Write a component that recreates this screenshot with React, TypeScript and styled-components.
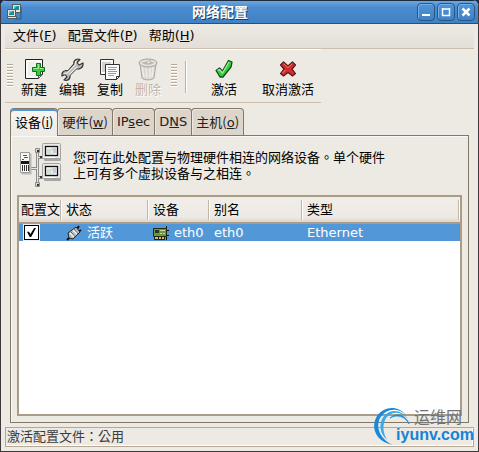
import React, { useState } from 'react';
import styled, { createGlobalStyle } from 'styled-components';

const GlobalStyle = createGlobalStyle`
  * { box-sizing: border-box; }
  body {
    margin: 0;
    background: #1c2a3c;
    color: #000;
    font: 13px/16px "DejaVu Sans", "Noto Sans CJK SC", sans-serif;
  }
  button {
    margin: 0;
    padding: 0;
    border: 0;
    background: none;
    color: inherit;
    font: inherit;
    white-space: nowrap;
  }
  svg { display: block; flex: none; }
`;

const Window = styled.main`
  display: flex;
  flex-direction: column;
  min-height: 100vh;
  overflow: hidden;
  background: #edeae4;
  border: 1px solid #40383a;
  border-top: 0;
  border-radius: 6px 6px 0 0;
`;

const TitleBar = styled.header`
  display: flex;
  align-items: center;
  height: 24px;
  padding: 0 3px 0 5px;
  background: linear-gradient(#6ba6e2, #4a8ccf 30%, #3f82c4);
  border-top: 1px solid #1d2b3f;
  border-bottom: 1px solid #2a4f78;
`;

const Title = styled.h1`
  flex: 1;
  margin: 0;
  color: #fff;
  font-size: 14px;
  line-height: 20px;
  text-align: center;
  text-shadow: 1px 1px 0 #1e3f66;
`;

const WindowButtons = styled.div`
  display: flex;
  gap: 2px;
`;

const WindowButton = styled.button`
  display: grid;
  place-items: center;
  width: 18px;
  height: 18px;
  background: linear-gradient(#4f94da, #3f82c4);
  border: 1px solid #2a5585;
  border-radius: 4px;
  box-shadow: inset 1px 1px 0 #78b0e8;
`;

const MenuBar = styled.nav`
  display: flex;
  gap: 1px;
  height: 25px;
  margin: 0 4px;
  padding: 0 3px;
  background: linear-gradient(#edeae4, #e3ded7);
  border-bottom: 1px solid #cdbfae;
`;

const MenuButton = styled.button`
  padding: 0 5px;
`;

const Toolbar = styled.div`
  display: flex;
  align-self: flex-start;
  height: 54px;
  margin-left: 4px;
  border-top: 1px solid #fff;
  border-bottom: 1px solid #cdbfae;
`;

const Grip = styled.span`
  align-self: center;
  width: 6px;
  height: 24px;
  margin: 0 2px;
  background: repeating-linear-gradient(#b8aa94 0 1px, #fff 1px 2px, #edeae4 2px 3px);
  &:not(:first-child) { margin-left: 4px; }
`;

const ToolButton = styled.button<{ $pad?: number }>`
  display: flex;
  flex-direction: column;
  align-items: center;
  padding: 6px ${p => p.$pad ?? 6}px 0;
  &:disabled {
    color: #bdb6ac;
    text-shadow: 1px 1px 0 #fff;
  }
`;

const Separator = styled.span`
  width: 2px;
  height: 32px;
  margin: 11px 6px 0;
  background: linear-gradient(90deg, #b8b0a4 50%, #fff 50%);
`;

const TabList = styled.div`
  display: flex;
  align-items: flex-end;
  margin: 5px 9px -1px;
  z-index: 1;
`;

const Tab = styled.button<{ $active: boolean }>`
  height: ${p => (p.$active ? 28 : 27)}px;
  margin-bottom: ${p => (p.$active ? 0 : 1)}px;
  padding: 0 4px;
  color: ${p => (p.$active ? '#000' : '#222')};
  background: ${p => (p.$active ? 'linear-gradient(#f8f6f3, #edeae4)' : '#ddd4ca')};
  border: 1px solid #857765;
  border-bottom: 0;
  border-radius: 4px 4px 0 0;
  box-shadow: ${p => (p.$active ? 'inset 0 2px 0 #4f96db' : 'inset 1px 1px 0 #eee8e1')};
  & + & { margin-left: -1px; }
`;

const TabName = styled.span`
  font-family: "Noto Sans CJK SC", sans-serif;
`;

const Panel = styled.section`
  display: flex;
  flex: 1;
  flex-direction: column;
  margin: 0 9px;
  padding: 6px;
  border: 1px solid #857765;
  box-shadow: inset 1px 1px 0 #faf8f5;
`;

const Intro = styled.div`
  display: flex;
  gap: 11px;
  height: 53px;
`;

const Description = styled.p`
  max-width: 314px;
  margin: 8px 0 0;
  font-family: "DejaVu Sans", "Noto Sans CJK TC", sans-serif;
`;

const TableFrame = styled.div`
  flex: 1;
  background: #fff;
  border: 2px solid #ab9c87;
`;

const DeviceTable = styled.table`
  width: 100%;
  table-layout: fixed;
  border-collapse: separate;
  border-spacing: 0;
`;

const HeadCell = styled.th`
  height: 27px;
  padding: 0 0 0 4px;
  overflow: hidden;
  font-weight: 400;
  text-align: left;
  white-space: nowrap;
  background:
    linear-gradient(#c0b7ab, #c0b7ab) right 1px center / 1px 20px no-repeat,
    linear-gradient(#fff, #fff) right center / 1px 20px no-repeat,
    linear-gradient(#f1eeea, #edeae4 80%, #ddd7ce);
  border-bottom: 2px solid #ab9c87;
  &:first-child { padding-left: 2px; }
`;

const Cell = styled.td`
  height: 17px;
  padding: 0 0 0 4px;
  color: #fff;
  background: #5298d8;
`;

const CellContent = styled.span`
  display: flex;
  align-items: center;
  gap: 5px;
`;

const Check = styled.input`
  display: grid;
  place-items: center;
  appearance: none;
  width: 15px;
  height: 15px;
  margin: 0 0 0 1px;
  background: #fff;
  border: 1px solid #000;
  box-shadow: 0 0 0 1px #e8eef5;
  &:checked::before {
    content: "";
    width: 9px;
    height: 9px;
    background: #000;
    clip-path: polygon(0 42%, 22% 42%, 38% 68%, 80% 0, 100% 0, 46% 100%, 30% 100%);
  }
`;

const StatusBar = styled.footer`
  height: 20px;
  margin: 4px;
  padding: 1px;
  color: #3c3c3c;
  font-family: "DejaVu Sans", "Noto Sans CJK TC", sans-serif;
  border: 1px solid #b5a794;
  box-shadow: inset -1px -1px 0 #fff;
`;

const Watermark = styled.a`
  position: absolute;
  right: 5px;
  bottom: 6px;
  z-index: 2;
  display: flex;
  text-decoration: none;
`;

const WatermarkText = styled.span`
  display: flex;
  flex-direction: column;
  margin-left: -15px;
  color: #1683d4;
  font: bold 16px/18px "Liberation Sans", sans-serif;
`;

const WatermarkName = styled.span`
  margin-left: 18px;
  color: #6e7277;
  font: 16px/20px "Noto Sans CJK SC", sans-serif;
`;

const AppIcon = () => (
  <svg width="17" height="17" viewBox="0 0 17 17">
    <path d="M15 3v12H9" fill="none" stroke="#315779" />
    <rect x="6.5" y=".5" width="8" height="8" fill="#e7e3da" stroke="#555b60" />
    <rect x="8" y="2" width="5" height="4" fill="#178e92" />
    <path d="M8 2h3L8 5z" fill="#43d1c8" />
    <path d="M1.500 14.500h9v-2h-9zM1.500 5.500h8v7h-8z" fill="#e7e3da" stroke="#555b60" />
    <rect x="3" y="7" width="5" height="4" fill="#178e92" />
    <path d="M3 7h4L3 10z" fill="#43d1c8" />
  </svg>
);

const NewIcon = () => (
  <svg width="26" height="26" viewBox="0 0 26 26">
    <path d="M4.500 3.500h17v15l-4 4h-13z" fill="#fafafa" stroke="#222" />
    <path d="M7 6h11v10l-3 4H7z" fill="#eeeeed" />
    <path d="M17.500 22.500v-4h4z" fill="#ddd" stroke="#555" />
    <path d="M15.500 7.500h4v4h4v4h-4v4h-4v-4h-4v-4h4z" fill="#43c646" stroke="#08751c" />
    <path d="M16.500 8.500h1v4h-5M19 12.500h3.500" fill="none" stroke="#a0f08b" />
  </svg>
);

const EditIcon = () => (
  <svg width="26" height="26" viewBox="0 0 26 26">
    <path
      d="M17 3.500c2-1 4 0 4 0l-3 3 2 2.500 4-2c.5 3-1 5-4 6h-3l-6 6c.5 3-1 5-4 5.500l-2-.5 3-3-2-2.500-3 1.500c-.5-3 1-5 4-5.500l2 .3 6-7c-.5-2 .5-3.500 2-4.300z"
      fill="#b8b8b8" stroke="#333" strokeWidth="1.200" strokeLinejoin="round"
    />
    <path d="M17 5l-1 4-8 8-3 1M18 11l-8 8" fill="none" stroke="#eee" strokeWidth="1.200" />
  </svg>
);

const CopyIcon = () => (
  <svg width="26" height="26" viewBox="0 0 26 26">
    <g fill="#fafafa" stroke="#333">
      <path d="M3.500 3.500h13v15h-13z" />
      <path d="M5 7h9M5 9h9M5 11h9M5 13h9M5 15h9" stroke="#aaa" />
      <path d="M8.500 8.500h14v12l-3 3h-11z" />
      <path d="M19.500 23.500v-3h3z" />
      <path d="M11 11.500h9M11 13.500h8M11 15.500h9M11 17.500h8M11 19.500h6" stroke="#999" />
    </g>
  </svg>
);

const DeleteIcon = () => (
  <svg width="26" height="26" viewBox="0 0 26 26">
    <path d="M5 8l2 14c2 2.500 10 2.500 12 0l2-14z" fill="#dad7d1" stroke="#aaa69f" />
    <path d="M7 10l2 11M11 11l1 11M15 11v11M18 11l-1 10" stroke="#eeece8" strokeWidth="1.500" />
    <ellipse cx="13" cy="7" rx="9" ry="4" fill="#e2dfd9" stroke="#a5a199" />
    <path d="M7 7c2-2 10-2 12 0-3 2-9 2-12 0z" fill="#bcb8b1" />
    <path d="M11 7l4-3 1 2-3 2z" fill="#eee" stroke="#aaa69f" strokeWidth=".7" />
  </svg>
);

const ApplyIcon = () => (
  <svg width="26" height="26" viewBox="0 0 26 26">
    <path d="M5 14.500l3.500-2.500 3 3 6-10.500L21 6l-1 5-8 10H9z" fill="#31cf3c" stroke="#174c1b" strokeWidth="1.300" strokeLinejoin="round" />
    <path d="M6.500 14.500l2-1 3 3.500 6.500-11" fill="none" stroke="#a8f09e" strokeWidth="1.300" />
  </svg>
);

const CancelIcon = () => (
  <svg width="26" height="26" viewBox="0 0 26 26">
    <path d="M8.500 6l4.500 4 4.500-4 3 3-3.500 4 3.500 4.500-3 2.500-4.500-3.500-4.500 3.500-3-2.500L9 13 5.500 9z" fill="#d52b2b" stroke="#551a1a" strokeWidth="1.200" strokeLinejoin="round" />
    <path d="M8.500 7.500l4.500 4 4.500-4M7.500 17l3-3" fill="none" stroke="#f47b73" />
  </svg>
);

const NetworkIcon = () => (
  <svg width="45" height="46" viewBox="0 0 45 46">
    <path d="M13 26.500h7M20.500 9v33M20 15.500h6M20 35.500h6" fill="none" stroke="#8d8d8b" strokeWidth="3" />
    <path d="M13 26.500h7M20.500 9v33M20 15.500h6M20 35.500h6" fill="none" stroke="#e6e6e4" />
    <path d="M18.500 6.500h4v4h-4zM18.500 40.500h4v4h-4z" fill="#d5d5d3" stroke="#8d8d8b" />
    <path d="M20 8h2v2h-2zM20 42h2v2h-2zM23 14h2v2h-2zM23 34h2v2h-2z" fill="#333" />
    <path d="M4.500 31.500h9v-20" fill="none" stroke="#bdbab5" strokeWidth="2" />
    <path d="M3.500 10.500h9v20h-9z" fill="#f7f7f6" stroke="#9b9b99" />
    <path d="M6 13.500h4M7 15.500h4M5 17.500h2" stroke="#555" />
    <path d="M4 19h8v3H4z" fill="#161616" />
    <path d="M5.500 23v6M7.500 23v6M9.500 23v6M11.500 23v6" stroke="#333" />
    {[1, 21].map(y => (
      <g key={y} transform={`translate(25 ${y})`}>
        <rect x="2" y="3" width="17" height="15" rx="1" fill="#aaa7a2" />
        <rect x=".5" y=".5" width="18" height="15" rx="1" fill="#e9e9e7" stroke="#a2a2a0" />
        <rect x="3.500" y="3.500" width="12" height="9" fill="#f1f3f1" stroke="#111" strokeWidth="1.300" />
        <path d="M5 6h4v4H5z" fill="#cfe0d0" />
        <path d="M11 5h3v5h-3z" fill="#c9c8dc" />
        <path d="M5 11h7M10 5v3" stroke="#c4c4ca" />
        <path d="M3 14.500h10" stroke="#fff" />
      </g>
    ))}
  </svg>
);

const PlugIcon = () => (
  <svg width="16" height="16" viewBox="0 0 16 16">
    <path d="M1 15l3-3M11 4l2-3M12 7l3-2" stroke="#111" strokeWidth="2" />
    <path d="M2 8l8-6 4 5-7 7-4-1z" fill="#b9bcbd" stroke="#252525" />
    <path d="M5 7l4 5M8 4l4 5" stroke="#555" />
    <path d="M4 8l4 4M7 5l4 4" stroke="#f4f4f4" strokeWidth="1.500" />
  </svg>
);

const CardIcon = () => (
  <svg width="16" height="16" viewBox="0 0 16 16">
    <path d="M0 3.500h14M13.500 1v14M14 5.500h2M14 10.500h2" stroke="#111" />
    <path d="M.5 3.500h13v8H.5z" fill="#6d9442" stroke="#202c17" />
    <path d="M2 5h4v3H2z" fill="#273d20" />
    <path d="M7 5.500h5M7 8.500h2M10 8.500h2" stroke="#d5d38d" />
    <path d="M1 12h11v3H1z" fill="#222" />
    <path d="M2 13h9" stroke="#d9bd54" strokeWidth="2" />
    <path d="M5.500 12v2M8.500 12v2" stroke="#222" />
  </svg>
);

const SwirlIcon = () => (
  <svg width="38" height="40" viewBox="0 0 38 40">
    <path d="M33 9C25-1 11 0 4 10-3 22 3 36 20 39 8 34 2 22 7 12 13 2 25 1 33 9z" fill="#1689dc" />
    <path d="M35 13C29 4 18 2 11 10 5 18 7 28 14 34 10 27 9 19 13 12 19 5 28 5 35 13z" fill="#39a9ea" />
    <path d="M36 18C33 9 24 6 17 12 24 8 32 10 36 18z" fill="#168bdc" stroke="#168bdc" strokeWidth=".8" />
  </svg>
);

const menus = [['文件', 'F'], ['配置文件', 'P'], ['帮助', 'H']];
const tools = [
  { label: '新建', Icon: NewIcon },
  { label: '编辑', Icon: EditIcon },
  { label: '复制', Icon: CopyIcon },
  { label: '删除', Icon: DeleteIcon, disabled: true },
];
const tabs = [
  ['设备(', 'i', ')'],
  ['硬件(', 'w', ')'],
  ['IP', 's', 'ec'],
  ['D', 'N', 'S'],
  ['主机(', 'o', ')'],
];

const TabText = ({ text }: { text: string }) =>
  /[()]/.test(text) ? <TabName>{text}</TabName> : <>{text}</>;

export default function App() {
  const [active, setActive] = useState(0);
  const [enabled, setEnabled] = useState(true);
  return (
    <>
      <GlobalStyle />
      <Window>
        <TitleBar>
          <AppIcon />
          <Title>网络配置</Title>
          <WindowButtons>
            <WindowButton aria-label="最小化">
              <svg width="12" height="12"><path d="M2 9h8" stroke="#fff" strokeWidth="2" /></svg>
            </WindowButton>
            <WindowButton aria-label="最大化">
              <svg width="12" height="12"><path d="M2.500 2v7.500h7V2M2 3h8" fill="none" stroke="#fff" strokeWidth="1.500" /></svg>
            </WindowButton>
            <WindowButton aria-label="关闭">
              <svg width="12" height="12"><path d="M2.500 2.500l7 7M9.500 2.500l-7 7" stroke="#fff" strokeWidth="2.500" /></svg>
            </WindowButton>
          </WindowButtons>
        </TitleBar>
        <MenuBar>
          {menus.map(([label, key]) => (
            <MenuButton key={key}>{label}(<u>{key}</u>)</MenuButton>
          ))}
        </MenuBar>
        <Toolbar>
          <Grip />
          {tools.map(({ label, Icon, disabled }) => (
            <ToolButton key={label} disabled={disabled}><Icon />{label}</ToolButton>
          ))}
          <Grip />
          <Separator />
          <ToolButton $pad={18}><ApplyIcon />激活</ToolButton>
          <ToolButton $pad={7}><CancelIcon />取消激活</ToolButton>
        </Toolbar>
        <TabList role="tablist">
          {tabs.map(([before, key, after], i) => (
            <Tab key={key} role="tab" aria-selected={i === active} $active={i === active} onClick={() => setActive(i)}>
              <TabText text={before} /><u>{key}</u><TabText text={after} />
            </Tab>
          ))}
        </TabList>
        <Panel role="tabpanel">
          <Intro>
            <NetworkIcon />
            <Description>您可在此处配置与物理硬件相连的网络设备。单个硬件上可有多个虚拟设备与之相连。</Description>
          </Intro>
          <TableFrame>
            <DeviceTable>
              <colgroup>
                <col width="43" /><col width="87" /><col width="61" /><col width="93" /><col />
              </colgroup>
              <thead>
                <tr>
                  <HeadCell>配置文</HeadCell>
                  <HeadCell>状态</HeadCell>
                  <HeadCell>设备</HeadCell>
                  <HeadCell>别名</HeadCell>
                  <HeadCell>类型</HeadCell>
                </tr>
              </thead>
              <tbody>
                <tr>
                  <Cell><Check type="checkbox" aria-label="eth0" checked={enabled} onChange={e => setEnabled(e.target.checked)} /></Cell>
                  <Cell><CellContent><PlugIcon />活跃</CellContent></Cell>
                  <Cell><CellContent><CardIcon />eth0</CellContent></Cell>
                  <Cell>eth0</Cell>
                  <Cell>Ethernet</Cell>
                </tr>
              </tbody>
            </DeviceTable>
          </TableFrame>
        </Panel>
        <StatusBar>激活配置文件：公用</StatusBar>
        <Watermark href="#iyunv">
          <SwirlIcon />
          <WatermarkText>
            <WatermarkName>运维网</WatermarkName>
            iyunv.com
          </WatermarkText>
        </Watermark>
      </Window>
    </>
  );
}
